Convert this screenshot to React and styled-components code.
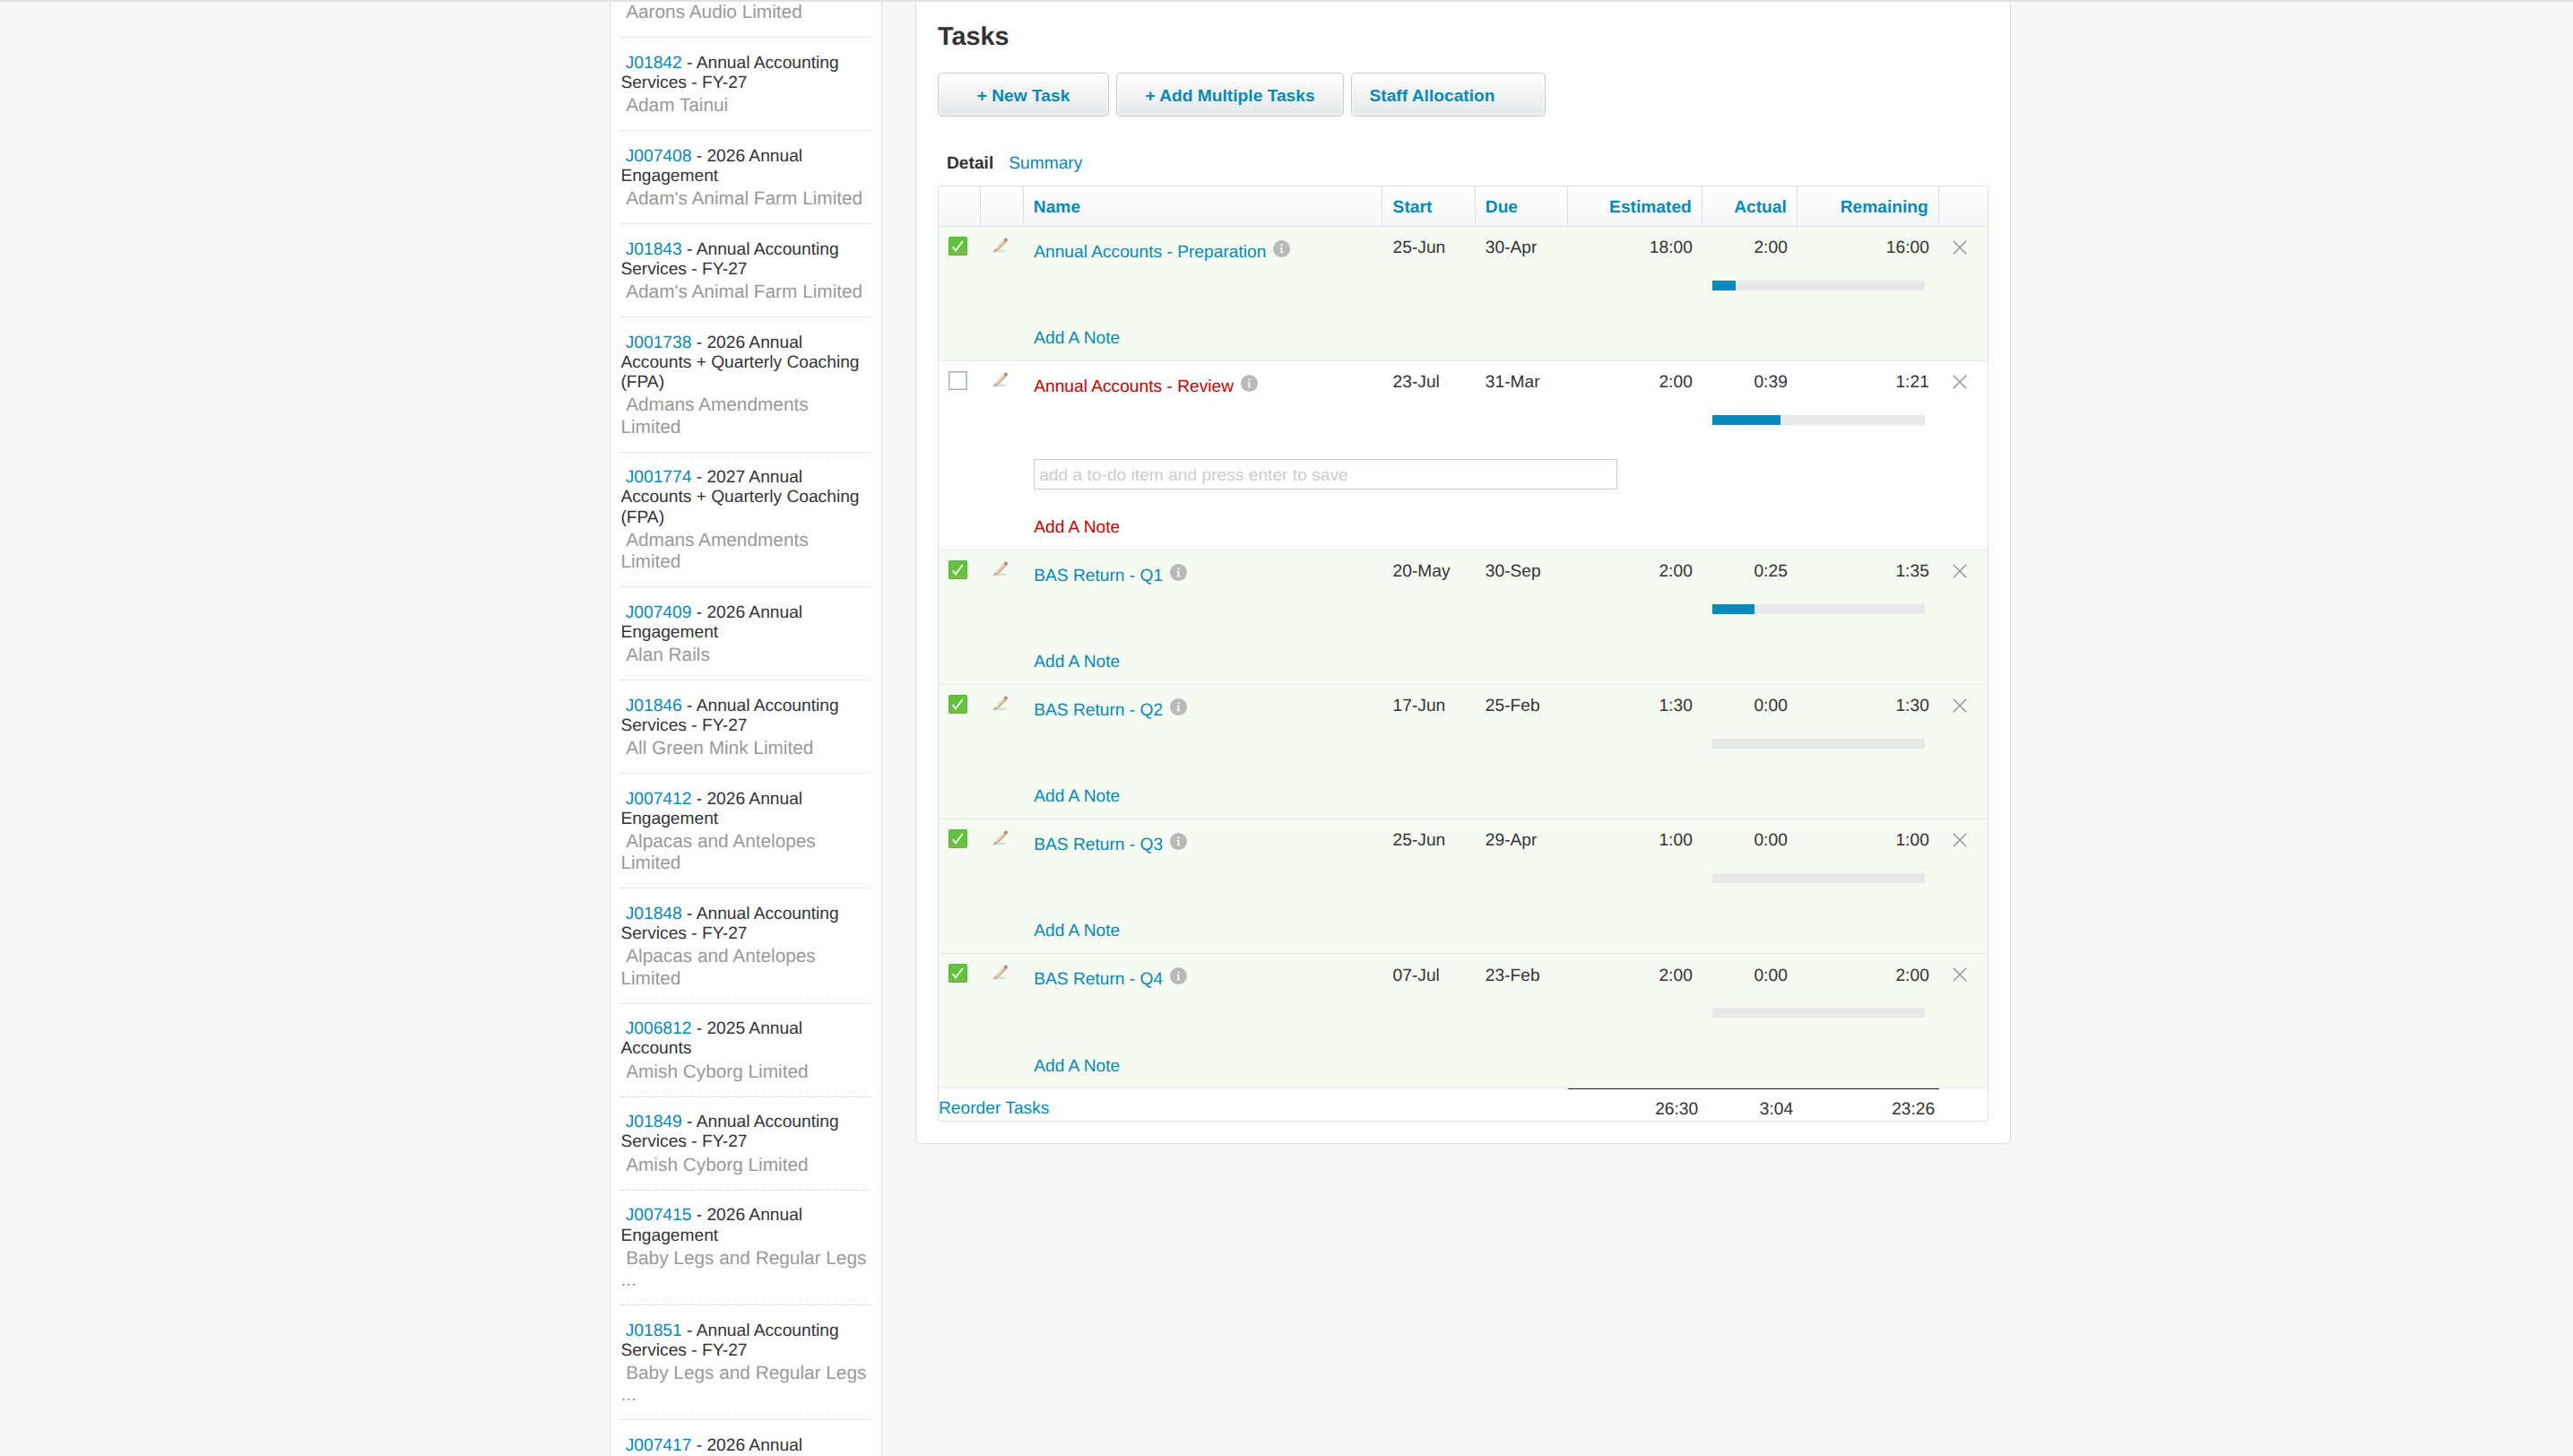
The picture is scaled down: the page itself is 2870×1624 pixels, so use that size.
import React from "react";
import styled, { createGlobalStyle, css } from "styled-components";

const BLUE = "#048abb";
const RED = "#cc0000";

const GlobalStyle = createGlobalStyle`
  * { box-sizing: border-box; }
  html, body { margin: 0; padding: 0; }
  body {
    background: #f5f7f9;
    color: #333;
    font-family: "Liberation Sans", Arial, Helvetica, sans-serif;
    font-size: 19.2px;
    line-height: 22px;
    text-rendering: geometricPrecision;
    overflow: hidden;
  }
`;

const Page = styled.div`
  height: 1624px;
  overflow: hidden;
  border-top: 2px solid #e4e2e4;
  padding-left: 680px;
  display: flex;
  align-items: flex-start;
  gap: 37px;
`;

const Sidebar = styled.aside`
  width: 304px;
  height: 1622px;
  overflow: hidden;
  background: #fff;
  border: solid #dddfe2;
  border-width: 0 1px;
  padding: 0 11px;
  flex: none;
`;

const JobItem = styled.div`
  padding: 17.6px 0 14.85px 0.4px;
  border-bottom: 1px dotted #d2d2d2;
  white-space: pre;
  ${(p) => p.$first && css`padding-top: 0;`}
`;

const JobTitle = styled.div`
  line-height: 22.2px;
`;

const JobClient = styled.div`
  margin-top: ${(p) => (p.$flush ? "-0.05px" : "2px")};
  font-size: 20.8px;
  line-height: 24.2px;
  color: #999;
`;

const Link = styled.a`
  color: ${(p) => (p.$overdue ? RED : BLUE)};
  text-decoration: none;
`;

const Panel = styled.main`
  width: 1222px;
  background: #fff;
  border: 1px solid #dddfe2;
  border-top: 0;
  border-radius: 0 0 5px 5px;
  padding: 21px 24px 24px;
  flex: none;
`;

const Heading = styled.h2`
  margin: 0;
  font-size: 28.8px;
  line-height: 36px;
  font-weight: bold;
`;

const Buttons = styled.div`
  display: flex;
  gap: 8px;
  margin-top: 22px;
`;

const Button = styled.button`
  width: ${(p) => p.$width}px;
  height: 49px;
  border: 1px solid #c8cacc;
  border-radius: 5px;
  background: linear-gradient(#fff, #fafbfb 20%, #e6e9eb 90%);
  box-shadow: inset 0 0 0 1.5px rgba(255, 255, 255, 0.45);
  color: ${BLUE};
  font: bold 19.2px/22px "Liberation Sans", Arial, sans-serif;
  text-align: ${(p) => (p.$left ? "left" : "center")};
  padding: 3px 0 0 ${(p) => (p.$left ? 19.5 : 0)}px;
`;

const Tabs = styled.div`
  display: flex;
  gap: 17px;
  margin: 42px 0 0 10px;
`;

const TabCurrent = styled.strong``;

const Table = styled.div`
  margin-top: 13px;
  border: 1px solid #dddfe2;
  border-radius: 4px;
`;

const columns = "47px 48px 400px 104px 103px 150px 106px 158px 54px";

const HeaderRow = styled.div`
  display: grid;
  grid-template-columns: ${columns};
  height: 45px;
  border-bottom: 1px solid #dddfe2;
  background: linear-gradient(#fff, #f6f7f9);
  border-radius: 4px 4px 0 0;
`;

const HeaderCell = styled.div`
  color: ${BLUE};
  font-weight: bold;
  line-height: 22px;
  padding: 13px 11.2px 0 ${(p) => p.$pad || 11.6}px;
  border-right: ${(p) => (p.$last ? "0" : "1px solid #dddfe2")};
  text-align: ${(p) => (p.$right ? "right" : "left")};
`;

const IconCell = styled.div`
  padding: ${(p) => p.$top}px 0 0 ${(p) => p.$left}px;
  svg { display: block; }
`;

const NameCell = styled.div`
  padding: 15px 0 0 11.2px;
  display: flex;
  flex-direction: column;
  align-items: flex-start;
  white-space: nowrap;
`;

const NameLine = styled.div`
  display: flex;
  gap: 8px;
  height: 28px;
  a { padding-top: 3px; }
`;

const TodoInput = styled.input`
  width: 651px;
  height: 34px;
  flex: none;
  margin-top: 66px;
  margin-bottom: -5px;
  border: 1px solid #ccc;
  border-radius: 0;
  outline: 0;
  background: #fff;
  padding: 1.5px 5px 0;
  font: 19.2px/22px "Liberation Sans", Arial, sans-serif;
  &::placeholder { color: #ccc; opacity: 1; }
`;

const Note = styled(Link)`
  margin-top: ${(p) => (p.$afterInput ? 37 : 71)}px;
`;

const Cell = styled.div`
  height: 35px;
  padding: 13px 11.2px 0 ${(p) => p.$pad || 11.6}px;
  text-align: ${(p) => (p.$right ? "right" : "left")};
`;

const TaskRow = styled.div`
  display: grid;
  grid-template-columns: 47px 48px 400px 104px 103px 150px 264px 54px;
  height: ${(p) => (p.$tall ? 211 : 150)}px;
  background: ${(p) => (p.$done ? "#f5fbf1" : "#fff")};
  border-bottom: 1px solid #e4e6e6;
  ${(p) => p.$last && css`
    ${Cell} { padding-top: 14px; }
    ${Note} { margin-top: 72px; }
  `}
`;

const Hours = styled.div`
  display: grid;
  grid-template-columns: 106px 158px;
  align-content: start;
`;

const Track = styled.div`
  grid-column: 1 / 3;
  margin: 25px 0 0 11px;
  width: 237px;
  height: 11px;
  background: #e8e8e8;
`;

const Fill = styled.div`
  height: 11px;
  background: ${BLUE};
`;

const FooterRow = styled.div`
  display: grid;
  grid-template-columns: 702px 150px 106px 158px 54px;
  height: 36px;
`;

const FooterCell = styled.div`
  padding: ${(p) => (p.$total ? 12 : 11)}px ${(p) => (p.$total ? 4.8 : 0)}px 0 0;
  text-align: ${(p) => (p.$total ? "right" : "left")};
  border-top: ${(p) => (p.$total ? "1px solid #222" : "1px solid transparent")};
`;

const CheckIcon = ({ checked }) =>
  checked ? (
    <svg width="21" height="21" viewBox="0 0 21 21">
      <rect width="21" height="21" rx="1.8" fill="#58b548" />
      <rect x="1" y="1" width="19" height="19" rx="1" fill="#62c13d" />
      <rect x="1" y="16.5" width="19" height="3.5" fill="#78bd3e" />
      <path d="M4.6 11.2 L8 15.4 L15.8 5" fill="none" stroke="#f0f9ea" strokeWidth="2" />
    </svg>
  ) : (
    <svg width="21" height="21" viewBox="0 0 21 21">
      <rect x="0.75" y="0.75" width="19.5" height="19.5" fill="#fff" stroke="#aeb0b4" strokeWidth="1.5" />
      <path d="M20.25 1.5 V19.5" stroke="#a3c6ae" strokeWidth="1.5" />
    </svg>
  );

const PencilIcon = () => (
  <svg width="18" height="18" viewBox="0 0 18 18">
    <path d="M2 16.4 L9 13.4 L16.5 14 L13 16 Z" fill="#cfcdd2" opacity="0.75" />
    <path d="M2.6 12.8 L12.8 1.6 L15.9 4.2 L5.6 14.8 Z" fill="#dcc6a6" />
    <path d="M2.6 12.8 L12.8 1.6 L14 2.6 L4 13.6 Z" fill="#eee0c8" />
    <path d="M5.2 14.6 L15.2 4.6" stroke="#c7a888" strokeWidth="1.2" />
    <path d="M0.6 16.8 L2.6 12.6 L5.8 14.8 Z" fill="#b7a797" />
    <circle cx="15" cy="2.7" r="2.1" fill="#b98d80" />
  </svg>
);

const InfoIcon = () => (
  <svg width="19" height="19" viewBox="0 0 19 19">
    <circle cx="9.5" cy="9.5" r="9.5" fill="#b9b9b9" />
    <rect x="8.5" y="4.4" width="2" height="2" fill="#fff" />
    <path d="M7.4 8 H10.3 V13.4 H11.6 V14.2 H7.4 V13.4 H8.6 V8.8 H7.4 Z" fill="#fff" />
  </svg>
);

const CloseIcon = () => (
  <svg width="16" height="16" viewBox="0 0 16 16">
    <path d="M0.8 0.8 L15.2 15.2 M15.2 0.8 L0.8 15.2" stroke="#999" strokeWidth="1.6" />
  </svg>
);

const services = " - Annual Accounting\nServices - FY-27";
const engagement = " - 2026 Annual\nEngagement";

const jobs = [
  ["J01842", services, "Adam Tainui"],
  ["J007408", engagement, "Adam's Animal Farm Limited"],
  ["J01843", services, "Adam's Animal Farm Limited"],
  ["J001738", " - 2026 Annual\nAccounts + Quarterly Coaching\n(FPA)", "Admans Amendments\nLimited"],
  ["J001774", " - 2027 Annual\nAccounts + Quarterly Coaching\n(FPA)", "Admans Amendments\nLimited"],
  ["J007409", engagement, "Alan Rails"],
  ["J01846", services, "All Green Mink Limited"],
  ["J007412", engagement, "Alpacas and Antelopes\nLimited"],
  ["J01848", services, "Alpacas and Antelopes\nLimited"],
  ["J006812", " - 2025 Annual\nAccounts", "Amish Cyborg Limited"],
  ["J01849", services, "Amish Cyborg Limited"],
  ["J007415", engagement, "Baby Legs and Regular Legs\n..."],
  ["J01851", services, "Baby Legs and Regular Legs\n..."],
  ["J007417", " - 2026 Annual", ""],
];

const tasks = [
  { name: "Annual Accounts - Preparation", start: "25-Jun", due: "30-Apr", est: "18:00", act: "2:00", rem: "16:00", fill: 26, done: true },
  { name: "Annual Accounts - Review", start: "23-Jul", due: "31-Mar", est: "2:00", act: "0:39", rem: "1:21", fill: 76, done: false },
  { name: "BAS Return - Q1", start: "20-May", due: "30-Sep", est: "2:00", act: "0:25", rem: "1:35", fill: 47, done: true },
  { name: "BAS Return - Q2", start: "17-Jun", due: "25-Feb", est: "1:30", act: "0:00", rem: "1:30", fill: 0, done: true },
  { name: "BAS Return - Q3", start: "25-Jun", due: "29-Apr", est: "1:00", act: "0:00", rem: "1:00", fill: 0, done: true },
  { name: "BAS Return - Q4", start: "07-Jul", due: "23-Feb", est: "2:00", act: "0:00", rem: "2:00", fill: 0, done: true },
];

const Task = ({ task, last }) => {
  const overdue = !task.done;
  return (
    <TaskRow $done={task.done} $tall={overdue} $last={last}>
      <IconCell $top={11} $left={11}><CheckIcon checked={task.done} /></IconCell>
      <IconCell $top={12} $left={13}><PencilIcon /></IconCell>
      <NameCell>
        <NameLine>
          <Link $overdue={overdue}>{task.name}</Link>
          <InfoIcon />
        </NameLine>
        {overdue && <TodoInput placeholder="add a to-do item and press enter to save" />}
        <Note $overdue={overdue} $afterInput={overdue}>Add A Note</Note>
      </NameCell>
      <Cell>{task.start}</Cell>
      <Cell $pad={10.8}>{task.due}</Cell>
      <Cell $right>{task.est}</Cell>
      <Hours>
        <Cell $right>{task.act}</Cell>
        <Cell $right>{task.rem}</Cell>
        <Track><Fill style={{ width: task.fill }} /></Track>
      </Hours>
      <IconCell $top={15} $left={15}><CloseIcon /></IconCell>
    </TaskRow>
  );
};

export default function App() {
  return (
    <>
      <GlobalStyle />
      <Page>
        <Sidebar>
          <JobItem $first>
            <JobClient $flush>{"\u00a0Aarons Audio Limited"}</JobClient>
          </JobItem>
          {jobs.map(([code, title, client]) => (
            <JobItem key={code}>
              <JobTitle>{"\u00a0"}<Link>{code}</Link>{title}</JobTitle>
              {client && <JobClient>{"\u00a0" + client}</JobClient>}
            </JobItem>
          ))}
        </Sidebar>
        <Panel>
          <Heading>Tasks</Heading>
          <Buttons>
            <Button $width={191}>+ New Task</Button>
            <Button $width={254}>+ Add Multiple Tasks</Button>
            <Button $width={217} $left>Staff Allocation</Button>
          </Buttons>
          <Tabs>
            <TabCurrent>Detail</TabCurrent>
            <Link>Summary</Link>
          </Tabs>
          <Table>
            <HeaderRow>
              <HeaderCell />
              <HeaderCell />
              <HeaderCell $pad={10.8}>Name</HeaderCell>
              <HeaderCell>Start</HeaderCell>
              <HeaderCell $pad={10.8}>Due</HeaderCell>
              <HeaderCell $right>Estimated</HeaderCell>
              <HeaderCell $right>Actual</HeaderCell>
              <HeaderCell $right>Remaining</HeaderCell>
              <HeaderCell $last />
            </HeaderRow>
            {tasks.map((t, i) => <Task key={t.name} task={t} last={i === tasks.length - 1} />)}
            <FooterRow>
              <FooterCell><Link>Reorder Tasks</Link></FooterCell>
              <FooterCell $total>26:30</FooterCell>
              <FooterCell $total>3:04</FooterCell>
              <FooterCell $total>23:26</FooterCell>
              <FooterCell />
            </FooterRow>
          </Table>
        </Panel>
      </Page>
    </>
  );
}
